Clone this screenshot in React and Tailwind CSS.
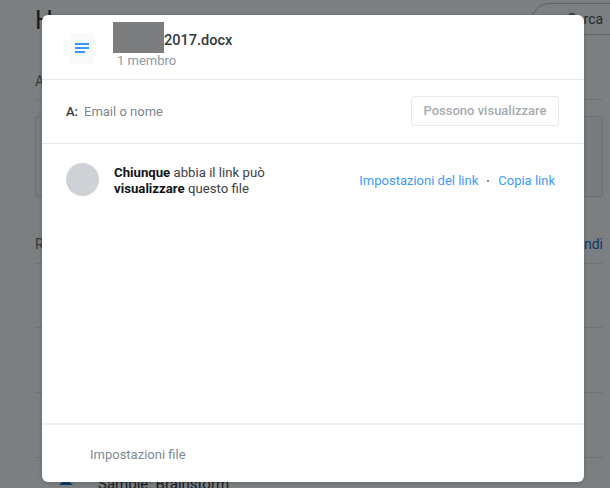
import React from 'react';

const SANS = { fontFamily: 'Roboto, "Liberation Sans", sans-serif' };

function BackgroundPage() {
  return (
    <div className="h-[488px] overflow-hidden bg-white pl-[35px] text-[#1e2329]">
      {/* Title + search */}
      <div className="flex h-[37px] items-start justify-between">
        <div className="mt-[6px] text-[25px] leading-[30px]">H</div>
        <div className="mt-[3px] -mr-[20px] flex h-[32px] w-[98px] items-center gap-[12px] rounded-l-[16px] border border-[#c3c7cc] pl-[13px] text-[14px] text-[#3c4146]">
          <span className="h-[9px] w-[9px] rounded-full border-2 border-[#3c4146]" />
          <span>Cerca</span>
        </div>
      </div>

      {/* Section */}
      <div className="mt-[34px] mr-[7px] h-[29px] border-b border-[#dfe2e5] text-[14px] text-[#5c6670]">A</div>
      <div className="mt-[16px] mr-[7px] h-[81px] rounded-[3px] border border-[#d5d9dd] bg-[#f7f9fa]" />

      {/* Recent files */}
      <div className="mt-[37px] mr-[7px] flex h-[30px] justify-between border-b border-[#dfe2e5] text-[14px] text-[#5c6670]">
        <span>R</span>
        <span className="text-[#0d60c9]">Approfondi</span>
      </div>
      <div className="mr-[7px] h-[64px] border-b border-[#dfe2e5]" />
      <div className="mr-[7px] h-[65px] border-b border-[#dfe2e5]" />
      <div className="mr-[7px] h-[65px] border-b border-[#dfe2e5]" />
      <div className="mt-[17px] ml-[24px] flex items-center gap-[25px]">
        <svg width="14" height="14" viewBox="0 0 14 14"><path d="M7 2l7 6H0z" fill="#0d60c9" /></svg>
        <span className="text-[15px] leading-[18px] text-[#1e2329]">Sample: Brainstorm</span>
      </div>
    </div>
  );
}

function DocIcon() {
  return (
    <div className="flex h-[31px] w-[24px] items-center justify-center bg-[#f7f9fa]">
      <svg width="14" height="11" viewBox="0 0 14 11">
        <rect x="0" y="0" width="14" height="2" fill="#3399ff" />
        <rect x="0" y="4" width="14" height="2" fill="#3399ff" />
        <rect x="0" y="8" width="10" height="2" fill="#3399ff" />
      </svg>
    </div>
  );
}

function ShareModal() {
  return (
    <div className="flex h-[467px] w-[542px] flex-col rounded-[6px] bg-white shadow-[0_1px_4px_rgba(0,0,0,0.2)]">
      {/* Header */}
      <div className="flex h-[65px] border-b border-[#e4e6e8] pl-[28px]">
        <div className="mt-[18px]"><DocIcon /></div>
        <div className="ml-[19px] mt-[7px]">
          <div className="flex items-end">
            <div className="h-[31px] w-[51px] bg-[#7c7d7f]" />
            <span className="mb-[1px] text-[14.5px] font-medium leading-[22px] text-[#33383d]">2017.docx</span>
          </div>
          <div className="ml-[4px] text-[13px] leading-[15px] text-[#8e98a3]">1 membro</div>
        </div>
      </div>

      {/* Recipient */}
      <div className="flex h-[64px] items-center justify-between border-b border-[#e4e6e8] pl-[24px] pr-[25px]">
        <div className="flex items-center text-[13px]">
          <span className="w-[18px] font-medium text-[#33383d]">A:</span>
          <span className="text-[#80868c]">Email o nome</span>
        </div>
        <div className="mb-[1px] flex h-[30px] w-[148px] items-center justify-center rounded-[3px] border border-[#e6e8eb] text-[13px] font-medium text-[#a5abb2]">
          Possono visualizzare
        </div>
      </div>

      {/* Link access */}
      <div className="flex flex-1 items-start pl-[24px] pr-[29px] pt-[19px]">
        <div className="h-[33px] w-[33px] rounded-full bg-[#ced1d6]" />
        <div className="ml-[15px] mt-[2px] w-[170px] text-[13.2px] leading-[16px] text-[#3c4146]">
          <div><b className="font-bold text-[#111417]">Chiunque</b> abbia il link può</div>
          <div><b className="font-bold text-[#111417]">visualizzare</b> questo file</div>
        </div>
        <div className="ml-auto mt-[10px] flex items-center text-[13px] leading-[16px] text-[#3d9bf5]">
          <span>Impostazioni del link</span>
          <span className="mx-[9px] h-[2px] w-[2px] bg-[#80868c]" />
          <span>Copia link</span>
        </div>
      </div>

      {/* Footer */}
      <div className="flex h-[59px] items-center border-t-2 border-[#eeeff1] pl-[48px] pt-[2px] text-[13px] text-[#7f8a94]">
        Impostazioni file
      </div>
    </div>
  );
}

export default function App() {
  return (
    <div className="relative h-[488px] w-[610px] overflow-hidden" style={SANS}>
      <BackgroundPage />
      {/* Dimmed overlay with dialog */}
      <div className="absolute inset-0 bg-[#11161a]/55 pl-[42px] pt-[15px]">
        <ShareModal />
      </div>
    </div>
  );
}
